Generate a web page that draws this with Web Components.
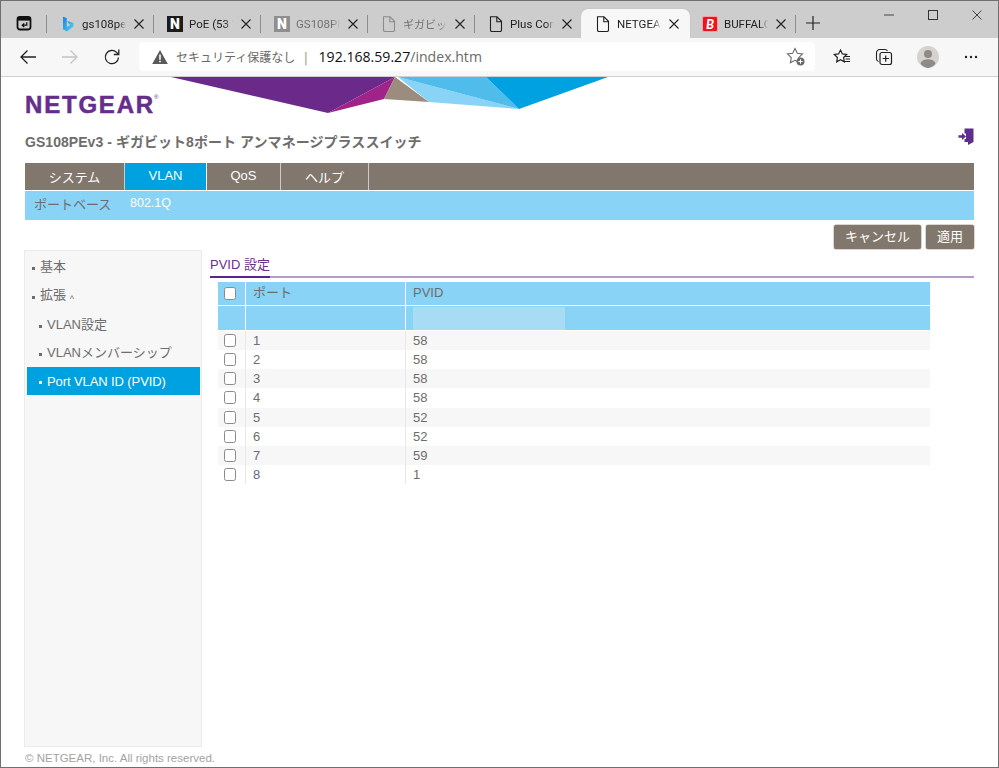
<!DOCTYPE html>
<html lang="ja"><head><meta charset="utf-8"><title>NETGEAR</title>
<style>
html,body{margin:0;padding:0;background:#fff}
body{font-family:"Liberation Sans","Noto Sans CJK JP",sans-serif}
</style></head><body>
<app-window>
  <browser-tabstrip>
    <browser-tab icon="bing" label="gs108pe"></browser-tab>
    <browser-tab icon="notion" label="PoE (53 V"></browser-tab>
    <browser-tab icon="notion-grey" label="GS108PE" dim></browser-tab>
    <browser-tab icon="file-grey" label="ギガビット" dim small></browser-tab>
    <browser-tab icon="file" label="Plus Con"></browser-tab>
    <browser-tab icon="file" label="NETGEAR" active></browser-tab>
    <browser-tab icon="buffalo" label="BUFFALO"></browser-tab>
  </browser-tabstrip>
  <browser-toolbar></browser-toolbar>
  <ng-page>
    <ng-header></ng-header>
    <ng-nav></ng-nav>
    <ng-actions></ng-actions>
    <ng-main>
      <ng-sidebar slot="side">
        <ng-item>基本</ng-item>
        <ng-item>拡張 <small style="font-size:9px;vertical-align:-3px">^</small></ng-item>
        <ng-item level="2">VLAN設定</ng-item>
        <ng-item level="2">VLANメンバーシップ</ng-item>
        <ng-item level="2" active>Port VLAN ID (PVID)</ng-item>
      </ng-sidebar>
      <ng-section heading="PVID 設定">
        <ng-table></ng-table>
      </ng-section>
    </ng-main>
    <ng-footer>© NETGEAR, Inc. All rights reserved.</ng-footer>
  </ng-page>
</app-window>
<script>
const ICONS={
 action:'<svg viewBox="0 0 16 16" width="16" height="16"><rect x="1.500" y="2" width="13" height="12.500" rx="2.400" fill="none" stroke="#111" stroke-width="1.800"/><path d="M2 3h12v2.600H2z" fill="#111"/><path d="M10.800 7.200v3H6.600M8.200 8.400l-1.900 1.800 1.900 1.700" fill="none" stroke="#111" stroke-width="1.300"/></svg>',
 bing:'<svg viewBox="0 0 16 16" width="16" height="16"><defs><linearGradient id="b" x1="0" y1="0" x2="1" y2="1"><stop offset="0" stop-color="#1780e0"/><stop offset="1" stop-color="#55d6f0"/></linearGradient></defs><path d="M3 .8l3.800 1.300v8.900l3.800-2.200-2-1-1.200-3 6 2.100v3.600L7 15.600 3 13.300z" fill="url(#b)"/></svg>',
 file:'<svg viewBox="0 0 16 16" width="16" height="16"><path d="M2.500 .8h6.500l4.500 4.500v8.600a1.600 1.600 0 0 1-1.600 1.600H4.100a1.600 1.600 0 0 1-1.600-1.600zM8.800 1v4.800h4.700" fill="none" stroke="#1f1f1f" stroke-width="1.100"/></svg>',
 'file-grey':'<svg viewBox="0 0 16 16" width="16" height="16"><path d="M2.500 .8h6.500l4.500 4.500v8.600a1.600 1.600 0 0 1-1.600 1.600H4.100a1.600 1.600 0 0 1-1.600-1.600zM8.800 1v4.800h4.700" fill="none" stroke="#8c8c8c" stroke-width="1.100"/></svg>',
 back:'<svg viewBox="0 0 18 18" width="18" height="18"><path d="M17 9H2M8.500 2.500 2 9l6.500 6.500" fill="none" stroke="#222" stroke-width="1.300"/></svg>',
 forward:'<svg viewBox="0 0 18 18" width="18" height="18"><path d="M1 9h15M9.500 2.500 16 9l-6.500 6.500" fill="none" stroke="#c4c4c4" stroke-width="1.300"/></svg>',
 refresh:'<svg viewBox="0 0 18 18" width="18" height="18"><path d="M15.500 9.500a6.600 6.600 0 1 1-1.900-5.100L15.500 6.300" fill="none" stroke="#222" stroke-width="1.300"/><path d="M15.800 1.500v5h-5" fill="none" stroke="#222" stroke-width="1.300"/></svg>',
 warn:'<svg viewBox="0 0 16 16" width="16" height="16"><path d="M8 1 15.800 15H.2z" fill="#5a5a5a"/><path d="M7.200 5.500h1.600v5.200H7.200zM7.200 11.700h1.600v1.600H7.200z" fill="#fff"/></svg>',
 starplus:'<svg viewBox="0 0 20 20" width="20" height="20"><path d="M9 1.500l2.300 4.800 5.200.7-3.800 3.600.9 5.200L9 13.300l-4.600 2.500.9-5.200L1.500 7l5.200-.7z" fill="none" stroke="#6a6a6a" stroke-width="1.100"/><circle cx="14.500" cy="14.500" r="4" fill="#6a6a6a"/><path d="M14.500 12.300v4.400M12.300 14.500h4.400" stroke="#fff" stroke-width="1"/></svg>',
 favs:'<svg viewBox="0 0 18 18" width="18" height="18"><path d="M7.500 2l1.900 3.900 4.300.6-3.100 3 .7 4.300-3.800-2-3.800 2 .7-4.300-3.100-3 4.300-.6z" fill="none" stroke="#222" stroke-width="1.200"/><path d="M12 8.500h5M12.500 11h4.500M11.500 13.500h5.500" stroke="#222" stroke-width="1.100"/></svg>',
 coll:'<svg viewBox="0 0 18 18" width="18" height="18"><path d="M3.500 13.500C2 13 1.500 12 1.500 11V5C1.500 3 3 1.500 5 1.500h5c1 0 2 .6 2.500 1.600" fill="none" stroke="#222" stroke-width="1.100"/><rect x="5" y="4.500" width="11.500" height="12" rx="2" fill="none" stroke="#222" stroke-width="1.200"/><path d="M10.700 7.500v6.200M7.700 10.500h6.200" stroke="#222" stroke-width="1.200"/></svg>',
 avatar:'<svg viewBox="0 0 22 22" width="22" height="22"><circle cx="11" cy="11" r="11" fill="#d6d2ce"/><circle cx="11" cy="8" r="4" fill="#8f8a86"/><path d="M3.500 17.500c1-3 4-4.200 7.500-4.200s6.500 1.200 7.500 4.200A10.800 10.800 0 0 1 11 22a10.800 10.800 0 0 1-7.500-4.500z" fill="#8f8a86"/></svg>',
 dots:'<svg viewBox="0 0 16 16" width="16" height="16"><circle cx="3" cy="8" r="1.200" fill="#222"/><circle cx="8" cy="8" r="1.200" fill="#222"/><circle cx="13" cy="8" r="1.200" fill="#222"/></svg>',
 close:'<svg viewBox="0 0 12 12" width="12" height="12"><path d="M1.500 1.500l9 9M10.500 1.500l-9 9" stroke="#222" stroke-width="1.100"/></svg>',
 plus:'<svg viewBox="0 0 14 14" width="14" height="14"><path d="M7 0v14M0 7h14" stroke="#222" stroke-width="1.200"/></svg>',
 min:'<svg viewBox="0 0 12 12" width="12" height="12"><path d="M1 6h10" stroke="#444" stroke-width="1"/></svg>',
 max:'<svg viewBox="0 0 12 12" width="12" height="12"><rect x="1.500" y="1.500" width="9" height="9" fill="none" stroke="#333" stroke-width="1"/></svg>',
 x:'<svg viewBox="0 0 12 12" width="12" height="12"><path d="M1.500 1.500l9 9M10.500 1.500l-9 9" stroke="#444" stroke-width="1"/></svg>',
 exit:'<svg viewBox="0 0 16 17" width="16" height="17"><path d="M6.500 .5H15.500V14L10 17V14H6.500V11H8V2.500H8V5.500H6.500z" fill="#5f2d91"/><path d="M.5 7.200H4V5L8 8.500 4 12V9.800H.5z" fill="#5f2d91"/></svg>'
};
function def(name,css,html){
  customElements.define(name,class extends HTMLElement{
    connectedCallback(){
      if(this.shadowRoot)return;
      const r=this.attachShadow({mode:'open'});
      r.innerHTML='<style>'+css+'</style>'+(typeof html==='function'?html(this):html);
    }
  });
}
def('ui-icon',':host{display:inline-flex;align-items:center;justify-content:center;line-height:0}',h=>ICONS[h.getAttribute('name')]||'');
def('app-window',':host{display:flex;flex-direction:column;box-sizing:border-box;width:999px;height:768px;border:1px solid #6f6f6f;overflow:hidden;background:#fff}','<slot></slot>');
def('browser-tabstrip',`:host{display:flex;align-items:flex-end;height:37px;background:#cdcdcd;flex:none}
 .act{box-sizing:border-box;width:46px;height:29px;padding:0 7px 1px 7px;display:flex;align-items:center;justify-content:center;background:linear-gradient(#8d8d8d,#8d8d8d) right 6px/1px 18px no-repeat}
 .new{width:34px;height:29px;display:flex;align-items:center;justify-content:center;padding-bottom:1px;box-sizing:border-box}
 .ctl{margin-left:auto;margin-right:-1px;display:flex;height:28px;align-self:flex-start}
 .ctl ui-icon{width:44px;height:28px}`,
 `<div class="act"><ui-icon name="action"></ui-icon></div><slot></slot><div class="new"><ui-icon name="plus"></ui-icon></div>
  <div class="ctl"><ui-icon name="min"></ui-icon><ui-icon name="max"></ui-icon><ui-icon name="x"></ui-icon></div>`);
def('browser-tab',`:host{box-sizing:border-box;display:flex;align-items:center;flex:none;width:107px;height:29px;padding:0 0 0 13px;font:11.500px Roboto,"Noto Sans CJK JP",sans-serif;color:#222;background:linear-gradient(#8d8d8d,#8d8d8d) right 6px/1px 18px no-repeat}
 :host([dim]){color:#707070}
 :host([small]) .t{font-size:11px}
 :host([active]){background:#f7f7f7;border-radius:7px 7px 0 0;margin:0 -1px;width:109px;padding-left:14px;box-shadow:0 0 1px #aaa}
 .ic{width:16px;height:16px;flex:none;display:flex;align-items:center;justify-content:center;font:900 14px Roboto,sans-serif;color:#fff;box-sizing:border-box}
 .notion{background:#1b1b1b}.notion-grey{background:#8f8f8f}
 .buffalo{background:#ea1520;font:italic 900 13px Lato,sans-serif;border:1px solid #f9a0a0;border-radius:2px}
 .t{width:44px;margin-left:6px;white-space:nowrap;-webkit-mask-image:linear-gradient(90deg,#000 82%,transparent);mask-image:linear-gradient(90deg,#000 82%,transparent)}
 ui-icon.c{margin-left:7px;flex:none}`,
 h=>{const i=h.getAttribute('icon');const l=h.getAttribute('label');
  let ic;
  if(i==='notion'||i==='notion-grey')ic=`<span class="ic ${i}">N</span>`;
  else if(i==='buffalo')ic=`<span class="ic buffalo">B</span>`;
  else ic=`<span class="ic"><ui-icon name="${i}"></ui-icon></span>`;
  return ic+`<span class="t">${l}</span><ui-icon class="c" name="close"></ui-icon>`;});
def('browser-toolbar',`:host{box-sizing:border-box;display:flex;align-items:center;height:39px;flex:none;background:#f7f7f7;border-bottom:1px solid #cfcfcf;padding:0 6px 1px 6px}
 .b{width:42px;height:32px;display:flex;align-items:center;justify-content:center;flex:none}
 .addr{flex:1;box-sizing:border-box;height:29px;margin:0 6px;background:#fff;border-radius:4px;display:flex;align-items:center;padding:0 9px 0 13px;font:12px "Noto Sans CJK JP",sans-serif;color:#6a6a6a}
 .s{margin:0 0 0 8px;white-space:nowrap;font-size:12px}
 .bar{margin:0 11px 0 9px;color:#777}
 .u{font:14.100px "Open Sans",sans-serif;color:#111;white-space:nowrap}.u span{color:#6a6a6a}
 .end{margin-left:auto}`,
 `<div class="b"><ui-icon name="back"></ui-icon></div><div class="b"><ui-icon name="forward"></ui-icon></div><div class="b"><ui-icon name="refresh"></ui-icon></div>
 <div class="addr"><ui-icon name="warn"></ui-icon><span class="s">セキュリティ保護なし</span><span class="bar">|</span><span class="u">192.168.59.27<span>/index.htm</span></span><ui-icon class="end" name="starplus"></ui-icon></div>
 <div class="b"><ui-icon name="favs"></ui-icon></div><div class="b"><ui-icon name="coll"></ui-icon></div><div class="b" style="margin-left:2px"><ui-icon name="avatar"></ui-icon></div><div class="b" style="margin-left:1px"><ui-icon name="dots"></ui-icon></div>`);
def('ng-page',':host{display:flex;flex-direction:column;flex:1;min-height:0;padding:0 24px;background:#fff}','<slot></slot>');
def('ng-header',`:host{display:grid;flex:none;height:86px;grid-template-rows:auto auto;align-content:start}
 svg{grid-area:1/1;display:block}
 .logo{grid-area:1/1;padding-top:16px;font:bold 24px/24px "Liberation Sans",sans-serif;letter-spacing:1.800px;color:#662d8c;-webkit-text-stroke:.5px #662d8c;height:24px;white-space:nowrap}
 .logo sup{font-size:6px;letter-spacing:0;font-weight:normal;-webkit-text-stroke:0;vertical-align:14px;line-height:0;margin-left:-1px}
 .row{grid-area:2/1;display:flex;justify-content:space-between;align-items:flex-start;padding-top:15px}
 .title{font:bold 14px/20px "Liberation Sans","Noto Sans CJK JP",sans-serif;letter-spacing:.05px;color:#6d6d6d;white-space:nowrap}
 ui-icon{margin-top:-4px}`,
 `<svg width="949" height="37" viewBox="0 0 949 37">
  <polygon points="146,0 370,0 303,36" fill="#6b2a8a"/>
  <polygon points="370,0 359,22 303,36" fill="#a0238a"/>
  <polygon points="370,0 359,22 404,25" fill="#9c8c7e"/>
  <polygon points="373,0 404,25 494,32" fill="#89d3f6"/>
  <polygon points="373,0 461,0 494,32" fill="#4fbcec"/>
  <polygon points="461,0 583,0 494,32" fill="#00a1e0"/></svg>
  <div class="logo">NETGEAR<sup>®</sup></div>
  <div class="row"><div class="title">GS108PEv3 - ギガビット8ポート アンマネージプラススイッチ</div><ui-icon name="exit"></ui-icon></div>`);
def('ng-nav',`:host{display:block;flex:none}
 .top{display:flex;height:27px;background:#82776c;border-bottom:1px solid #fff}
 .t{box-sizing:border-box;display:flex;align-items:center;justify-content:center;color:#fff;font-size:13px;border-right:1px solid #cfcac5;height:27px}
 .t.on{background:#00a1e0;border-right-color:#fff;padding-bottom:2px}
 .sub{display:flex;height:29px;background:#89d3f6;font-size:13px;align-items:flex-start;line-height:24px}
 .sub .a{margin-left:9px;color:#6d6d6d;width:96px;padding-top:2px}.sub .b{color:#fff;font-size:12.500px}`,
 `<div class="top"><div class="t" style="width:100px">システム</div><div class="t on" style="width:82px">VLAN</div><div class="t" style="width:74px;padding-bottom:2px">QoS</div><div class="t" style="width:88px">ヘルプ</div></div>
  <div class="sub"><span class="a">ポートベース</span><span class="b">802.1Q</span></div>`);
def('ng-actions',`:host{display:flex;flex:none;justify-content:flex-end;gap:5px;padding-top:5px;height:25px}
 .b{box-sizing:border-box;height:24px;display:flex;align-items:center;justify-content:center;background:#82776c;color:#fff;border-radius:2px;font-size:13px;padding-bottom:3px;box-shadow:0 0 0 .5px #b5aea7}`,
 `<div class="b" style="width:87px">キャンセル</div><div class="b" style="width:48px">適用</div>`);
def('ng-main',`:host{display:flex;flex:none;gap:8px;height:497px;margin-left:-1px}`,'<slot name="side"></slot><slot></slot>');
def('ng-sidebar',`:host{box-sizing:border-box;display:flex;flex-direction:column;width:178px;height:497px;flex:none;background:#f7f7f7;border:1px solid #ebebeb;padding:2px 1px 0 2px}`,'<slot></slot>');
def('ng-item',`:host{box-sizing:border-box;display:flex;align-items:center;height:28px;padding:0 0 4px 5px;color:#6d6d6d;font-size:13px;white-space:nowrap;flex:none}
 :host(:nth-child(-n+2)){margin-bottom:1px}
 :host([level="2"]){padding-left:12px}
 :host([active]){background:#00a1e0;color:#fff;padding-bottom:0;letter-spacing:-.1px}
 i{width:3px;height:3px;background:currentColor;margin-right:5px;flex:none;margin-top:6px}
 :host([active]) i{margin-top:2px}`,'<i></i><span><slot></slot></span>');
def('ng-section',`:host{display:block;flex:1;min-width:0}
 h2{margin:0;box-sizing:border-box;font:normal 13px/30px "Liberation Sans","Noto Sans CJK JP",sans-serif;color:#6b2f8f;width:max-content;height:28px;border-bottom:2px solid #5f2391;position:relative;z-index:1}
 .line{height:2px;background:#b79ccb;margin-top:-2px}
 .body{padding:4px 44px 0 8px}`,
 h=>`<h2>${h.getAttribute('heading')}</h2><div class="line"></div><div class="body"><slot></slot></div>`);
def('ng-table',`:host{display:block;font-size:13px;color:#6d6d6d}
 .r{display:grid;grid-template-columns:27px 160px 1fr;height:19.130px;line-height:19px;box-sizing:border-box}
 .r>div{box-sizing:border-box;min-width:0}
 .r>div+div{border-left:1px solid #e8e8e8;padding-left:7px}
 .r.odd{background:#f7f7f7}
 .h{background:#89d3f6;border-bottom:1px solid #fff;height:24px;line-height:22px}
 .h>div+div{border-left-color:#fff!important}
 .f{height:25px}
 .c{display:flex;align-items:center;justify-content:center}
 .c i{box-sizing:border-box;display:block;width:12px;height:13px;border:1.500px solid #8a8a8a;border-radius:2.500px;background:#fff;margin-right:3px}
 .inp{box-sizing:border-box;width:152px;height:23px;background:#a8dcf4}
 .f .p{padding-left:7px;padding-top:1px}`,
 ()=>{
  let s=`<div class="r h"><div class="c"><i></i></div><div>ポート</div><div>PVID</div></div><div class="r h f"><div></div><div></div><div class="p"><div class="inp"></div></div></div>`;
  [58,58,58,58,52,52,59,1].forEach((v,i)=>{s+=`<div class="r${i%2?'':' odd'}"><div class="c"><i></i></div><div${i==7?' style="color:#5b6b8a"':''}>${i+1}</div><div>${v}</div></div>`});
  return s;});
def('ng-footer',`:host{display:block;flex:none;font-size:11.500px;line-height:14px;padding-top:4px;color:#a3a3a3;white-space:nowrap}`,'<slot></slot>');
</script>
</body></html>
